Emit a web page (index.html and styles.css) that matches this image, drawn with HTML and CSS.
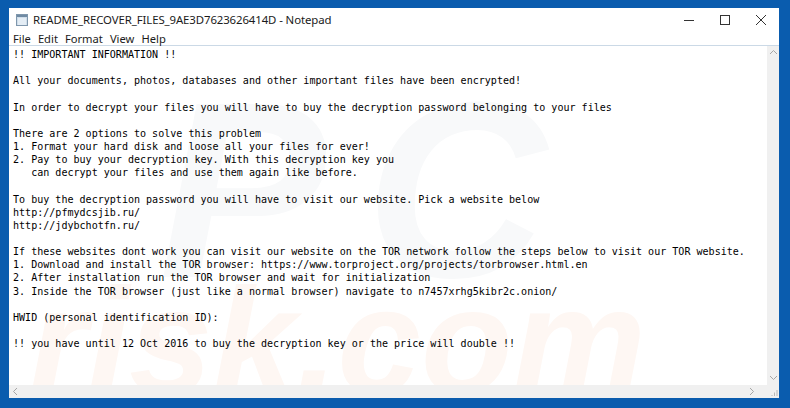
FILE: index.html
```html
<!DOCTYPE html>
<html lang="en">
<head>
<meta charset="utf-8">
<title>Notepad</title>
<link rel="stylesheet" href="styles.css">
</head>
<body>
<div class="window">
  <div class="titlebar">
    <svg class="app-icon" width="12" height="12" viewBox="0 0 12 12">
      <rect x="0.5" y="0.5" width="11" height="11" fill="#cfdde9" stroke="#7f97ad"/>
      <rect x="1" y="1" width="10" height="2" fill="#6f8aa3"/>
      <rect x="2" y="4" width="8" height="7" fill="#e4edf5"/>
    </svg>
    <span class="title">README_RECOVER_FILES_9AE3D7623626414D - Notepad</span>
    <div class="controls">
      <svg class="ctl" width="10" height="10" viewBox="0 0 10 10"><path d="M0 5.5H10" stroke="#333" stroke-width="1"/></svg>
      <svg class="ctl" width="10" height="10" viewBox="0 0 10 10"><rect x="0.5" y="0.5" width="9" height="9" fill="none" stroke="#333" stroke-width="1"/></svg>
      <svg class="ctl" width="10" height="10" viewBox="0 0 10 10"><path d="M0 0L10 10M10 0L0 10" stroke="#333" stroke-width="1"/></svg>
    </div>
  </div>
  <div class="menubar">
    <span>File</span><span>Edit</span><span>Format</span><span>View</span><span>Help</span>
  </div>
  <div class="content">
    <div class="editor">
      <div class="wm wm-pc" aria-hidden="true">PC</div>
      <div class="wm wm-risk" aria-hidden="true">risk.com</div>
<pre class="text">!! IMPORTANT INFORMATION !!

All your documents, photos, databases and other important files have been encrypted!

In order to decrypt your files you will have to buy the decryption password belonging to your files

There are 2 options to solve this problem
1. Format your hard disk and loose all your files for ever!
2. Pay to buy your decryption key. With this decryption key you
   can decrypt your files and use them again like before.

To buy the decryption password you will have to visit our website. Pick a website below
http://pfmydcsjib.ru/
http://jdybchotfn.ru/

If these websites dont work you can visit our website on the TOR network follow the steps below to visit our TOR website.
1. Download and install the TOR browser: https://www.torproject.org/projects/torbrowser.html.en
2. After installation run the TOR browser and wait for initialization
3. Inside the TOR browser (just like a normal browser) navigate to n7457xrhg5kibr2c.onion/

HWID (personal identification ID):

!! you have until 12 Oct 2016 to buy the decryption key or the price will double !!</pre>
    </div>
    <div class="vscroll">
      <svg width="9" height="6" viewBox="0 0 9 6"><path d="M1 5L4.5 1.5L8 5" fill="none" stroke="#a6a6a6" stroke-width="1"/></svg>
      <svg width="9" height="6" viewBox="0 0 9 6"><path d="M1 1L4.5 4.5L8 1" fill="none" stroke="#a6a6a6" stroke-width="1"/></svg>
    </div>
  </div>
  <div class="hbar">
    <div class="hscroll">
      <svg width="6" height="9" viewBox="0 0 6 9"><path d="M5 1L1.5 4.5L5 8" fill="none" stroke="#a6a6a6" stroke-width="1"/></svg>
      <svg width="6" height="9" viewBox="0 0 6 9"><path d="M1 1L4.5 4.5L1 8" fill="none" stroke="#a6a6a6" stroke-width="1"/></svg>
    </div>
    <div class="grip">
      <svg width="8" height="8" viewBox="0 0 8 8"><path d="M7 1V7M4.5 3.5V7M2 6V7" stroke="#b8b8b8" stroke-width="1"/></svg>
    </div>
  </div>
</div>
</body>
</html>
```

FILE: styles.css
```css
html, body {
  margin: 0;
  padding: 0;
  background: #0a5cae;
  width: 790px;
  height: 408px;
  overflow: hidden;
}

.window {
  margin: 8px 11px 10px 9px;
  width: 770px;
  height: 390px;
  background: #ffffff;
  display: flex;
  flex-direction: column;
  font-family: "Noto Sans", "Open Sans", sans-serif;
}

.titlebar {
  height: 23px;
  display: flex;
  align-items: center;
  padding-left: 7px;
  flex: none;
}

.app-icon {
  flex: none;
  margin-top: 1px;
}

.title {
  margin-left: 5px;
  font-size: 11.4px;
  color: #1a1a1a;
  letter-spacing: -0.1px;
}

.controls {
  margin-left: auto;
  display: flex;
  align-items: center;
  gap: 26px;
  padding-right: 13px;
}

.ctl {
  display: block;
}

.menubar {
  height: 14px;
  border-bottom: 1px solid #cbd9e6;
  display: flex;
  align-items: center;
  gap: 7px;
  padding-left: 4px;
  font-size: 11.2px;
  color: #1a1a1a;
  flex: none;
}

.content {
  flex: 1;
  display: flex;
  min-height: 0;
}

.editor {
  flex: 1;
  position: relative;
  overflow: hidden;
}

.text {
  position: relative;
  margin: 0;
  padding: 2px 0 0 4px;
  font-family: "DejaVu Sans Mono", "Liberation Mono", monospace;
  font-size: 10.05px;
  line-height: 13.14px;
  color: #000;
  white-space: pre;
}

.wm {
  position: absolute;
  font-family: "Liberation Sans", "DejaVu Sans", sans-serif;
  font-weight: bold;
  font-style: italic;
  line-height: 1;
  white-space: nowrap;
  pointer-events: none;
}

.wm-pc {
  left: 150px;
  top: 20px;
  font-size: 250px;
  color: #f8f9fa;
  letter-spacing: 40px;
}

.wm-risk {
  left: 20px;
  top: 220px;
  font-size: 150px;
  color: #fef7f3;
}

.vscroll {
  width: 12px;
  flex: none;
  background: #f0f0f0;
  display: flex;
  flex-direction: column;
  justify-content: space-between;
  align-items: center;
  padding: 3px 0 4px;
}

.hbar {
  height: 13px;
  display: flex;
  flex: none;
}

.hscroll {
  flex: 1;
  background: #f0f0f0;
  display: flex;
  justify-content: space-between;
  align-items: center;
  padding: 0 12px 0 3px;
}

.grip {
  width: 12px;
  background: #f0f0f0;
  display: flex;
  align-items: flex-end;
  justify-content: flex-end;
  padding: 0 1px 1px 0;
  box-sizing: border-box;
}
```
